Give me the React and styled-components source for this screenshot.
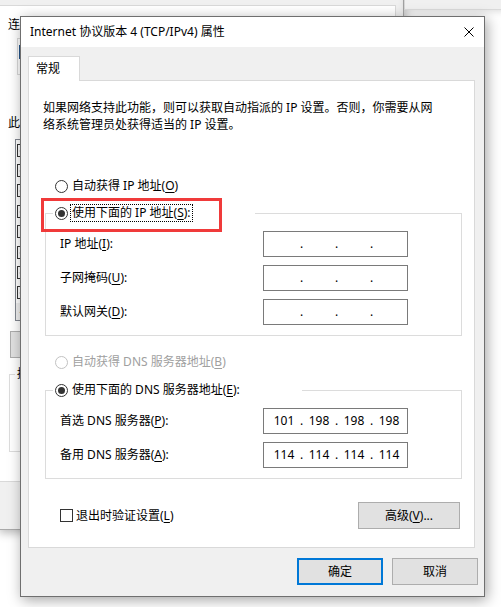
import styled, { createGlobalStyle } from "styled-components";

const GlobalStyle = createGlobalStyle`
  html, body {
    margin: 0;
    padding: 0;
  }
  body {
    width: 501px;
    height: 607px;
    overflow: hidden;
    background: #fff;
    font-family: "Noto Sans", "Noto Sans CJK SC", sans-serif;
    font-size: 12px;
    color: #000;
  }
  * {
    box-sizing: border-box;
  }
`;

const Desktop = styled.div`
  position: relative;
  width: 501px;
  height: 607px;
  overflow: hidden;
  background: #fff;
`;

/* ---------- window behind the dialog ---------- */

const BackWindow = styled.div`
  position: absolute;
  left: -2px;
  top: -30px;
  width: 406px;
  height: 560px;
  background: #f0f0f0;
  border: 1px solid #a9a9a9;
  box-shadow: 1px 3px 9px rgba(0, 0, 0, 0.28);
  display: flex;
  flex-direction: column;
`;

const BackPanel = styled.div`
  margin: 34px 7px 0 0;
  height: 477px;
  background: #fff;
  border: 1px solid #d9d9d9;
  padding: 11px 0 0 8px;
  display: flex;
  flex-direction: column;
  align-items: flex-start;
`;

/* only the first glyph of each label peeks out from under the dialog */
const BackText = styled.div`
  line-height: 16px;
  margin-top: ${(p) => p.$mt || 0}px;
  white-space: nowrap;
`;

const AdapterBox = styled.div`
  margin: 5px 0 0 9px;
  width: 360px;
  height: 37px;
  border: 1px solid #d9d9d9;
  background: #fff;
  padding: 6px 0 0 1px;
`;

const AdapterIcon = styled.div`
  width: 16px;
  height: 14px;
  background: #3d7ab8;
  border: 1px solid #24558a;
`;

const ListBox = styled.div`
  margin: 8px 0 0 7px;
  width: 370px;
  height: 182px;
  border: 1px solid #828790;
  background: #fff;
  display: flex;
  flex-direction: column;
`;

const ListRow = styled.div`
  height: 20.5px;
  display: flex;
  align-items: center;
  padding-left: 1px;
`;

const SmallCheck = styled.span`
  width: 13px;
  height: 13px;
  border: 1px solid #333;
  background: #fff;
  display: flex;
  align-items: center;
  justify-content: center;
  flex: none;
`;

const HScroll = styled.div`
  margin-top: auto;
  height: 17px;
  background: #f0f0f0;
  display: flex;
  align-items: center;
  padding-left: 3px;
  font-size: 8px;
  color: #606060;
`;

const BackButton = styled.div`
  margin: 10px 0 0 2px;
  width: 80px;
  height: 27px;
  background: #e1e1e1;
  border: 1px solid #adadad;
`;

const BackGroup = styled.fieldset`
  margin: 8px 0 0 1px;
  width: 370px;
  height: 86px;
  padding: 0;
  border: 1px solid #dcdcdc;
  min-width: 0;
`;

const BackLegend = styled.legend`
  padding: 0 2px;
  margin-left: 5px;
  line-height: 16px;
  white-space: nowrap;
`;

const TopRightWindow = styled.div`
  position: absolute;
  left: 404px;
  top: -30px;
  width: 120px;
  height: 40px;
  background: #f0f0f0;
  border-left: 1px solid #d6d6d6;
  border-bottom: 1px solid #dadada;
  box-shadow: 0 2px 6px rgba(0, 0, 0, 0.12);
`;

/* ---------- the dialog ---------- */

const Dialog = styled.div`
  position: absolute;
  left: 20px;
  top: 16px;
  width: 465px;
  height: 581px;
  border: 1px solid #6f6f6f;
  background: #f0f0f0;
  box-shadow: 2px 3px 13px rgba(0, 0, 0, 0.36);
  display: flex;
  flex-direction: column;
`;

const TitleBar = styled.div`
  height: 30px;
  flex: none;
  background: #fff;
  display: flex;
  align-items: center;
  padding-left: 9px;
`;

const Title = styled.div`
  flex: 1;
  line-height: 16px;
  white-space: nowrap;
`;

const CloseButton = styled.div`
  width: 30px;
  height: 30px;
  display: flex;
  align-items: center;
  justify-content: center;
`;

const Body = styled.div`
  flex: 1;
  display: flex;
  flex-direction: column;
  padding-top: 9px;
`;

const Tabs = styled.div`
  display: flex;
  margin-left: 7px;
`;

const Tab = styled.div`
  position: relative;
  z-index: 1;
  width: 52px;
  height: 25px;
  margin-bottom: -1px;
  background: #fff;
  border: 1px solid #d9d9d9;
  border-bottom: none;
  padding-left: 7px;
  line-height: 23px;
`;

const Panel = styled.div`
  height: 468px;
  margin: 0 9px 0 7px;
  background: #fff;
  border: 1px solid #d9d9d9;
  padding-top: 18px;
  display: flex;
  flex-direction: column;
`;

const Intro = styled.p`
  margin: 0 0 0 14px;
  line-height: 17px;
  white-space: nowrap;
`;

const RadioRow = styled.div`
  display: flex;
  align-items: center;
  height: 18px;
  line-height: 16px;
  white-space: nowrap;
  margin: ${(p) => p.$mt || 0}px 0 0 ${(p) => p.$ml || 0}px;
  color: ${(p) => (p.$disabled ? "#a0a0a0" : "#000")};
`;

const RadioMark = styled.span`
  width: 13px;
  height: 13px;
  flex: none;
  border-radius: 50%;
  border: 1px solid ${(p) => (p.$disabled ? "#c2c2c2" : "#333")};
  background: #fff;
  display: flex;
  align-items: center;
  justify-content: center;
  margin-right: 4px;

  &::after {
    content: "";
    display: ${(p) => (p.$checked ? "block" : "none")};
    width: 7px;
    height: 7px;
    border-radius: 50%;
    background: #333;
  }
`;

const FocusText = styled.span`
  margin-left: -2px;
  padding: 0 1px;
  border: 1px dotted #000;
`;

const Key = styled.span`
  text-decoration: underline;
  text-underline-offset: 2px;
`;

const GroupBox = styled.fieldset`
  margin: ${(p) => p.$mt}px 12px 0 16px;
  padding: 9px 0 10px 14px;
  border: 1px solid #dcdcdc;
  min-width: 0;
`;

const Legend = styled.legend`
  position: relative;
  width: ${(p) => p.$w}px;
  height: 18px;
  padding: 0 0 0 2px;
  margin-left: -7px;
`;

const Highlight = styled.div`
  position: absolute;
  left: -12px;
  top: -6px;
  width: 181px;
  height: 34px;
  border: 3px solid #f03a3a;
  pointer-events: none;
`;

const FieldRows = styled.div`
  display: grid;
  grid-template-columns: 203px 145px;
  row-gap: 8px;
  align-items: center;
`;

const FieldLabel = styled.div`
  line-height: 16px;
  white-space: nowrap;
`;

const IpBox = styled.div`
  height: 26px;
  border: 1px solid #7a7a7a;
  background: #fff;
  display: flex;
  align-items: center;
  padding-left: 6px;
  line-height: 16px;
`;

const Octet = styled.span`
  width: 28px;
  text-align: center;
`;

const Dot = styled.span`
  width: 7px;
  text-align: center;
`;

const BottomRow = styled.div`
  margin-top: 23px;
  display: flex;
  align-items: center;
  justify-content: space-between;
  padding: 0 14px 0 31px;
`;

const CheckRow = styled.div`
  display: flex;
  align-items: center;
  line-height: 16px;
`;

const CheckBox = styled.span`
  width: 13px;
  height: 13px;
  border: 1px solid #333;
  background: #fff;
  margin-right: 3px;
`;

const Button = styled.div`
  width: ${(p) => p.$w}px;
  height: 27px;
  background: #e1e1e1;
  border: ${(p) => (p.$primary ? "2px solid #0078d7" : "1px solid #adadad")};
  display: flex;
  align-items: center;
  justify-content: center;
  line-height: 16px;
  white-space: nowrap;
`;

const ButtonRow = styled.div`
  display: flex;
  justify-content: flex-end;
  gap: 9px;
  margin-top: 10px;
  padding-right: 6px;
`;

const IpField = ({ values }) => (
  <IpBox>
    <Octet>{values ? values[0] : ""}</Octet>
    <Dot>.</Dot>
    <Octet>{values ? values[1] : ""}</Octet>
    <Dot>.</Dot>
    <Octet>{values ? values[2] : ""}</Octet>
    <Dot>.</Dot>
    <Octet>{values ? values[3] : ""}</Octet>
  </IpBox>
);

const Tick = () => (
  <svg width="9" height="9" viewBox="0 0 9 9">
    <path d="M1 4.5 L3.5 7 L8 1.5" fill="none" stroke="#222" strokeWidth="1.3" />
  </svg>
);

const backRows = [true, true, true, true, false, true, true, true];

const App = () => (
  <Desktop>
    <GlobalStyle />

    <BackWindow>
      <BackPanel>
        <BackText>连</BackText>
        <AdapterBox>
          <AdapterIcon />
        </AdapterBox>
        <BackText $mt={40}>此</BackText>
        <ListBox>
          {backRows.map((on, i) => (
            <ListRow key={i}>
              <SmallCheck>{on && <Tick />}</SmallCheck>
            </ListRow>
          ))}
          <HScroll>◀</HScroll>
        </ListBox>
        <BackButton />
        <BackGroup>
          <BackLegend>描</BackLegend>
        </BackGroup>
      </BackPanel>
    </BackWindow>
    <TopRightWindow />

    <Dialog>
      <TitleBar>
        <Title>Internet 协议版本 4 (TCP/IPv4) 属性</Title>
        <CloseButton>
          <svg width="10" height="10" viewBox="0 0 10 10">
            <path d="M0.5 0.5 L9.5 9.5 M9.5 0.5 L0.5 9.5" stroke="#000" strokeWidth="1" />
          </svg>
        </CloseButton>
      </TitleBar>

      <Body>
        <Tabs>
          <Tab>常规</Tab>
        </Tabs>

        <Panel>
          <Intro>
            如果网络支持此功能，则可以获取自动指派的 IP 设置。否则，你需要从网
            <br />
            络系统管理员处获得适当的 IP 设置。
          </Intro>

          <RadioRow $mt={44} $ml={26}>
            <RadioMark />
            自动获得 IP 地址(<Key>O</Key>)
          </RadioRow>

          <GroupBox $mt={9}>
            <Legend $w={202}>
              <RadioRow>
                <RadioMark $checked />
                <FocusText>
                  使用下面的 IP 地址(<Key>S</Key>):
                </FocusText>
              </RadioRow>
              <Highlight />
            </Legend>
            <FieldRows>
              <FieldLabel>
                IP 地址(<Key>I</Key>):
              </FieldLabel>
              <IpField />
              <FieldLabel>
                子网掩码(<Key>U</Key>):
              </FieldLabel>
              <IpField />
              <FieldLabel>
                默认网关(<Key>D</Key>):
              </FieldLabel>
              <IpField />
            </FieldRows>
          </GroupBox>

          <RadioRow $mt={17} $ml={26} $disabled>
            <RadioMark $disabled />
            自动获得 DNS 服务器地址(<Key>B</Key>)
          </RadioRow>

          <GroupBox $mt={10}>
            <Legend $w={249}>
              <RadioRow>
                <RadioMark $checked />
                使用下面的 DNS 服务器地址(<Key>E</Key>):
              </RadioRow>
            </Legend>
            <FieldRows>
              <FieldLabel>
                首选 DNS 服务器(<Key>P</Key>):
              </FieldLabel>
              <IpField values={["101", "198", "198", "198"]} />
              <FieldLabel>
                备用 DNS 服务器(<Key>A</Key>):
              </FieldLabel>
              <IpField values={["114", "114", "114", "114"]} />
            </FieldRows>
          </GroupBox>

          <BottomRow>
            <CheckRow>
              <CheckBox />
              退出时验证设置(<Key>L</Key>)
            </CheckRow>
            <Button $w={102}>
              高级(<Key>V</Key>)...
            </Button>
          </BottomRow>
        </Panel>

        <ButtonRow>
          <Button $w={86} $primary>
            确定
          </Button>
          <Button $w={86}>取消</Button>
        </ButtonRow>
      </Body>
    </Dialog>
  </Desktop>
);

export default App;
